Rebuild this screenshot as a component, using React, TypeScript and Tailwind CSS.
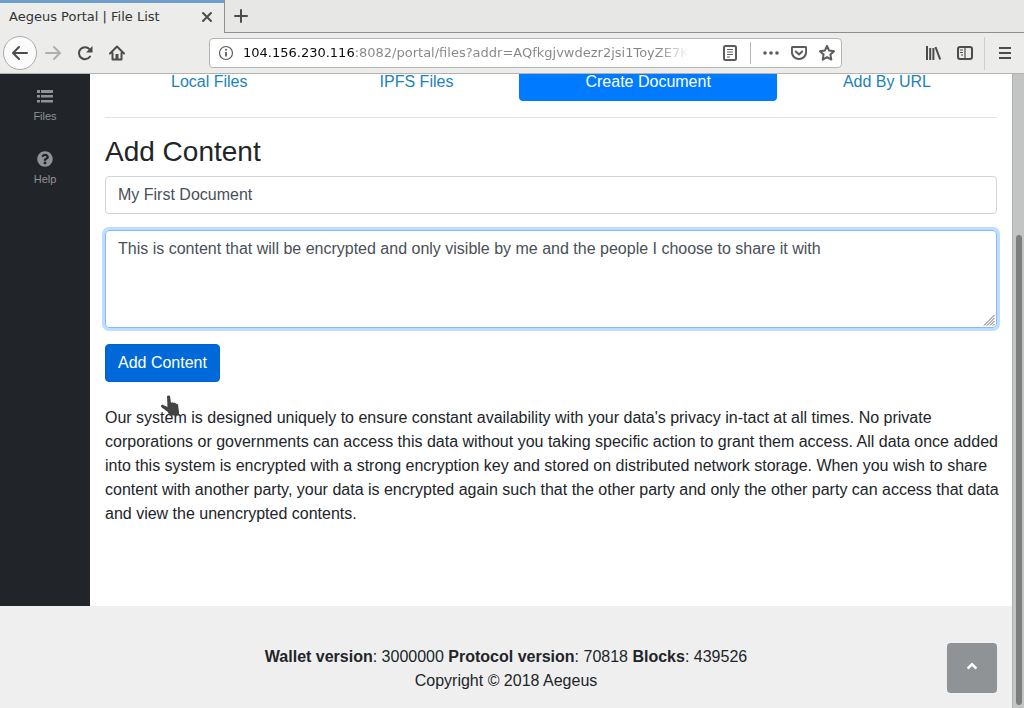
import React from "react";
import { FaQuestionCircle, FaAngleUp } from "react-icons/fa";

const stroke = {
  fill: "none",
  stroke: "currentColor",
  strokeWidth: 2,
  strokeLinecap: "round" as const,
  strokeLinejoin: "round" as const,
};

function Icon({ children, className = "" }: { children: React.ReactNode; className?: string }) {
  return (
    <svg viewBox="0 0 16 16" aria-hidden="true" className={`size-4 shrink-0 ${className}`} {...stroke}>
      {children}
    </svg>
  );
}

function BrowserChrome() {
  return (
    <header className="shrink-0 text-[#4c4c4c]">
      <div className="flex h-[33px] bg-[#e7e7e5]">
        <div className="flex w-56 items-center justify-between border-t-3 border-[#6f9fca] bg-[#ececeb] pr-[9px] pb-[3px] pl-[9px]">
          <span className="font-['DejaVu_Sans',sans-serif] text-[13px] text-[#333]">Aegeus Portal | File List</span>
          <button aria-label="Close tab">
            <Icon>
              <path d="M4 4l8 8M12 4l-8 8" />
            </Icon>
          </button>
        </div>
        <div className="flex flex-1 items-center border-b border-l border-[#8f8f8f] pl-2">
          <button aria-label="New tab">
            <Icon>
              <path d="M8 2v12M2 8h12" />
            </Icon>
          </button>
        </div>
      </div>
      <div className="flex h-[41px] items-center border-b border-[#b3b3b1] bg-[#ececeb] pr-[11px] pl-[3px]">
        <button aria-label="Back" className="flex size-[34px] items-center justify-center rounded-full border border-[#ababab] bg-[#fbfbfb]">
          <Icon>
            <path d="M15 8H1.500M7 2L1 8l6 6" />
          </Icon>
        </button>
        <button aria-label="Forward" className="ml-2 text-[#afafaf]">
          <Icon>
            <path d="M1 8h13.500M9 2l6 6-6 6" />
          </Icon>
        </button>
        <button aria-label="Reload" className="ml-4">
          <Icon>
            <path d="M12.500 4.200A6 6 0 1 0 13 11.500" />
            <path d="M15.500 1v6.500H9z" fill="currentColor" stroke="none" />
          </Icon>
        </button>
        <button aria-label="Home" className="ml-4">
          <Icon>
            <path d="M1 8.500L8 1.500l7 7M3.500 8v6.500h9V8" />
            <path d="M8 9v5" strokeWidth="3" strokeLinecap="butt" />
          </Icon>
        </button>
        <div className="ml-[84px] flex h-[30px] w-[633px] items-center rounded-[4px] border border-[#b5b5b3] bg-white pr-1.5 pl-2 text-[#5b5b5b]">
          <Icon>
            <circle cx="8" cy="8" r="6.500" strokeWidth="1.200" />
            <path d="M8 7v4.500" strokeWidth="1.800" strokeLinecap="butt" />
            <circle cx="8" cy="4.800" r="1" fill="currentColor" stroke="none" />
          </Icon>
          <input
            aria-label="Address"
            readOnly
            value="104.156.230.116:8082/portal/files?addr=AQfkgjvwdezr2jsi1ToyZE7Kd"
            className="ml-[9px] w-[444px] bg-[linear-gradient(90deg,#0c0c0d_111px,#858585_111px,#858585_415px,transparent_446px)] bg-clip-text font-['DejaVu_Sans',sans-serif] text-[13px] text-transparent outline-none"
          />
          <button aria-label="Reader view" className="ml-auto">
            <Icon>
              <rect x="2" y="1" width="12" height="14" rx="1.500" />
              <path d="M5 4.500h6M5 7h6M5 9.500h6M5 12h3" strokeWidth="1" strokeLinecap="butt" />
            </Icon>
          </button>
          <span className="mx-3 h-[22px] w-px bg-[#b5b5b5]" />
          <button aria-label="Page actions">
            <Icon>
              <g fill="currentColor" stroke="none">
                <circle cx="2" cy="8" r="1.800" />
                <circle cx="8" cy="8" r="1.800" />
                <circle cx="14" cy="8" r="1.800" />
              </g>
            </Icon>
          </button>
          <button aria-label="Save to Pocket" className="ml-3">
            <Icon>
              <path d="M1.500 2h13a.6.6 0 0 1 .6.6V7A7.100 7 0 0 1 .9 7V2.600a.6.6 0 0 1 .6-.6z" />
              <path d="M4.800 6.500L8 9.500l3.200-3" />
            </Icon>
          </button>
          <button aria-label="Bookmark this page" className="ml-3">
            <Icon>
              <path d="M8 1l2.100 4.600 4.900.6-3.600 3.400.9 5L8 12.200 3.700 14.600l.9-5L1 6.200l4.900-.6z" />
            </Icon>
          </button>
        </div>
        <button aria-label="Library" className="ml-auto">
          <Icon>
            <path d="M2 1v14M5.200 3v12M8.400 3v12M10.500 2L15.200 14.500" strokeLinecap="butt" />
          </Icon>
        </button>
        <button aria-label="Sidebars" className="ml-4">
          <Icon>
            <rect x="1" y="2" width="14" height="12" rx="2" />
            <path d="M8 2v12M3 5h3M3 7.500h3M4 10h2" strokeWidth="1.200" strokeLinecap="butt" />
          </Icon>
        </button>
        <span className="mr-3 ml-[11px] h-[33px] w-px bg-[#cfcfcd]" />
        <button aria-label="Open menu">
          <Icon>
            <path d="M2 3h12M2 8h12M2 13h12" strokeLinecap="butt" />
          </Icon>
        </button>
      </div>
    </header>
  );
}

const tabs = ["Local Files", "IPFS Files", "Create Document", "Add By URL"];

export default function App() {
  return (
    <div className="flex h-screen flex-col overflow-hidden bg-white font-['Liberation_Sans',Arial,sans-serif] text-base text-[#212529]">
      <BrowserChrome />
      <div className="flex min-h-0 flex-1">
        <div className="flex min-w-0 flex-1 flex-col overflow-hidden">
          <div className="flex flex-1">
            <nav className="flex w-[90px] shrink-0 flex-col items-center gap-[23px] bg-[#212529] pt-3.5 text-[11px] leading-4 text-[#909396]">
              <a href="#files" className="flex flex-col items-center gap-1 pb-1">
                <svg viewBox="0 0 16 16" aria-hidden="true" className="size-4" fill="currentColor">
                  <path d="M0 2h3v3H0zM4 2h12v3H4zM0 7h3v2.500H0zM4 7h12v2.500H4zM0 12h3v2.500H0zM4 12h12v2.500H4z" />
                </svg>
                Files
              </a>
              <a href="#help" className="flex flex-col items-center gap-1">
                <FaQuestionCircle className="size-4" />
                Help
              </a>
            </nav>
            <main className="min-w-0 flex-1 px-[15px]">
              <nav className="-mt-3 flex">
                {tabs.map((tab) => (
                  <a
                    key={tab}
                    href="#tab"
                    className={`flex-auto rounded-[4px] px-3.5 pt-2 pb-[7px] text-center ${
                      tab === "Create Document" ? "bg-[#007bff] text-white" : "text-[#1b82bb]"
                    }`}
                  >
                    {tab}
                  </a>
                ))}
              </nav>
              <hr className="my-4 border-[#e3e3e3]" />
              <h3 className="mb-1.5 text-[28px] leading-9">Add Content</h3>
              <form onSubmit={(event) => event.preventDefault()}>
                <input
                  aria-label="Title"
                  defaultValue="My First Document"
                  className="mb-4 block h-[38px] w-full rounded-[4px] border border-[#ced4da] px-3 text-[#495057] outline-none"
                />
                <div className="relative mb-4">
                  <textarea
                    aria-label="Content"
                    defaultValue="This is content that will be encrypted and only visible by me and the people I choose to share it with"
                    className="block h-[98px] w-full resize-none rounded-[4px] border border-[#80bdff] px-3 py-1.5 text-[#495057] ring-3 ring-[#bfdeff] outline-none"
                  />
                  <svg viewBox="0 0 12 12" aria-hidden="true" className="pointer-events-none absolute right-0.5 bottom-0.5 size-3">
                    <path d="M1 11.500L11.500 1M4 11.500L11.500 4M7 11.500L11.500 7M10 11.500l1.500-1.500" fill="none" stroke="#666" />
                  </svg>
                </div>
                <div className="relative w-fit">
                  <button className="h-[38px] rounded-[4px] border border-[#0062cc] bg-[#0069d9] px-3 text-white">Add Content</button>
                  <svg viewBox="0 0 20 22" aria-hidden="true" className="absolute top-[51px] left-[55px] h-[22px] w-5">
                    <path
                      d="M7 1.500c0-1.500 3-1.500 3.100 0L11 8c.5-1 2.200-.8 2.500.3.700-.8 2.200-.4 2.500.6.900-.5 2 .1 2.100 1.200L19 17v3.500H9.500L7.800 17 1.500 12.300c-1.300-1.300.1-3 1.700-2.400L7.500 12z"
                      fill="#444"
                    />
                  </svg>
                </div>
              </form>
              <p className="mt-6 -mr-2.5">
                Our system is designed uniquely to ensure constant availability with your data's privacy in-tact at all times. No
                private corporations or governments can access this data without you taking specific action to grant them access.
                All data once added into this system is encrypted with a strong encryption key and stored on distributed network
                storage. When you wish to share content with another party, your data is encrypted again such that the other party
                and only the other party can access that data and view the unencrypted contents.
              </p>
            </main>
          </div>
          <footer className="relative bg-[#efefef] pt-[39px] pb-[15px] text-center">
            <p>
              <b>Wallet version</b>: 3000000 <b>Protocol version</b>: 70818 <b>Blocks</b>: 439526
            </p>
            <p>Copyright © 2018 Aegeus</p>
            <button
              aria-label="Back to top"
              className="absolute right-[15px] bottom-[15px] flex size-[50px] items-center justify-center rounded-[4px] bg-[#909396] pb-1 text-white"
            >
              <FaAngleUp className="size-4" />
            </button>
          </footer>
        </div>
        <div className="flex w-3 shrink-0 flex-col items-center border-l border-[#b0b2b1] bg-[#c3c5c4] pb-[3px]">
          <div className="mt-auto h-[74.5%] w-1.5 rounded-full bg-[#7b7e7d]" />
        </div>
      </div>
    </div>
  );
}
